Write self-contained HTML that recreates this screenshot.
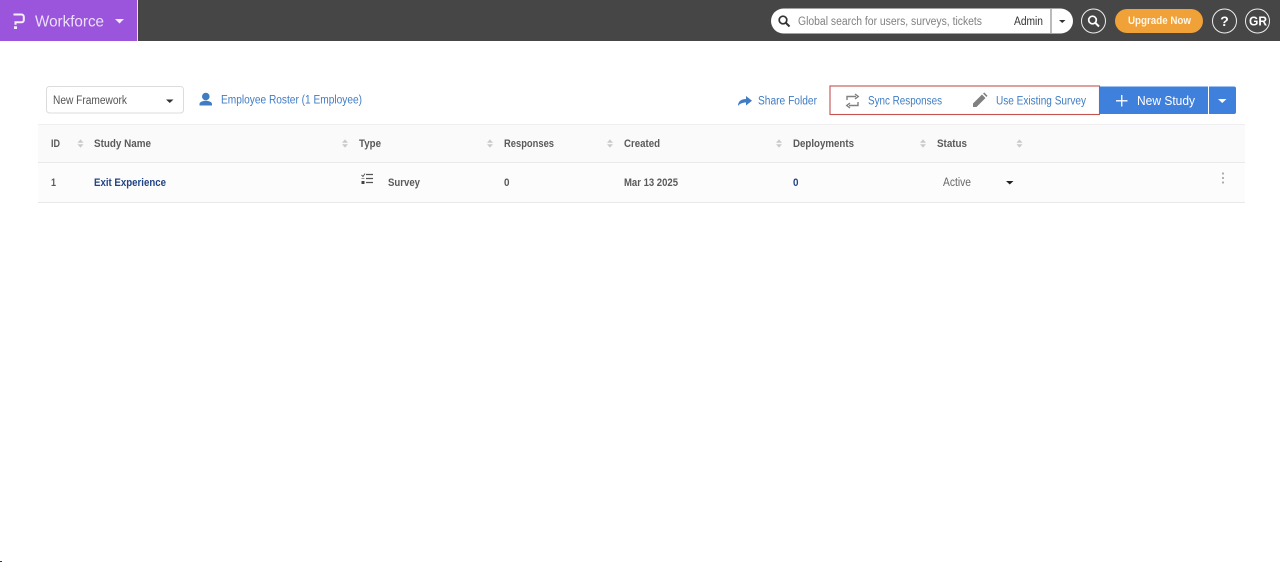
<!DOCTYPE html>
<html lang="en">
<head>
<meta charset="utf-8">
<title>Workforce</title>
<style>
html,body{margin:0;padding:0;background:#fff;width:1280px;height:562px;overflow:hidden}
svg{display:block}
text{font-family:"Liberation Sans",sans-serif;font-size:11.5px}
.h{fill:#5a5a5a;font-weight:bold;font-size:11px}
.l{fill:#3f7cc4}
.b{fill:#5a5a5a;font-weight:bold;font-size:11px}
.n{fill:#234584;font-weight:bold;font-size:11px}
</style>
</head>
<body>
<svg width="1280" height="562" viewBox="0 0 1280 562" xmlns="http://www.w3.org/2000/svg">
<defs>
<g id="s"><path d="M0 3.800 3 0.400 6 3.800Z M0 5.200 3 8.600 6 5.200Z" fill="#c9c9c9"/></g>
</defs>
<rect width="1280" height="562" fill="#fff"/>
<rect width="1280" height="41" fill="#464646"/>
<rect width="137" height="41" fill="#9a55dc"/>
<rect x="137" width="1" height="41" fill="#eadcf6"/>
<path d="M13.500 14.500H21.500A2.300 2.300 0 0 1 23.800 16.800V20A2.300 2.300 0 0 1 21.500 22.300H15.500V24.800" fill="none" stroke="#f6f0fc" stroke-width="2"/>
<rect x="14" y="26.300" width="3" height="2.700" fill="#f6f0fc"/>
<text x="35" y="26.500" style="font-size:16px" fill="#ecdffa" textLength="69" lengthAdjust="spacingAndGlyphs">Workforce</text>
<path d="M115 19H124L119.500 23.500Z" fill="#f3eafb"/>

<rect x="771" y="8.500" width="302" height="25" rx="12.500" fill="#fff"/>
<circle cx="783" cy="20" r="3.800" fill="none" stroke="#333" stroke-width="1.700"/>
<path d="M785.800 22.800 789.500 26.500" stroke="#333" stroke-width="2"/>
<text x="798" y="25" fill="#808080" style="font-size:11.500px" textLength="184" lengthAdjust="spacingAndGlyphs">Global search for users, surveys, tickets</text>
<text x="1014" y="25" fill="#333" style="font-size:11.500px" textLength="29" lengthAdjust="spacingAndGlyphs">Admin</text>
<rect x="1050.500" y="9" width="1" height="24" fill="#777"/>
<path d="M1059 20H1065.500L1062.250 23Z" fill="#333"/>

<circle cx="1093.500" cy="21" r="12" fill="none" stroke="#eee" stroke-width="1"/>
<circle cx="1092.500" cy="20" r="3.800" fill="none" stroke="#fff" stroke-width="1.700"/>
<path d="M1095.300 22.800 1099 26.500" stroke="#fff" stroke-width="2"/>
<rect x="1115" y="9" width="88" height="24" rx="12" fill="#f0a238"/>
<text x="1128" y="24" fill="#fff" style="font-size:11px;font-weight:bold" fill-opacity=".9" textLength="63" lengthAdjust="spacingAndGlyphs">Upgrade Now</text>
<circle cx="1224.500" cy="21" r="12" fill="none" stroke="#eee" stroke-width="1"/>
<text x="1224.500" y="26" fill="#fff" text-anchor="middle" style="font-size:14px;font-weight:bold">?</text>
<circle cx="1257.500" cy="21" r="12" fill="none" stroke="#eee" stroke-width="1"/>
<text x="1249" y="25.500" fill="#fff" style="font-size:12.500px;font-weight:bold" textLength="18" lengthAdjust="spacingAndGlyphs">GR</text>

<rect x="46.500" y="86.500" width="137" height="26.500" rx="3" fill="#fff" stroke="#dcdcdc"/>
<text x="53" y="104" fill="#555" textLength="74" lengthAdjust="spacingAndGlyphs">New Framework</text>
<path d="M166 99.500H173.500L169.750 103Z" fill="#333"/>
<circle cx="205.800" cy="96.500" r="3.800" fill="#3f7cc4"/>
<path d="M199.500 105.500V104C199.500 102 203 100.800 205.800 100.800S212 102 212 104V105.500Z" fill="#3f7cc4"/>
<text class="l" x="221" y="103.500" textLength="141" lengthAdjust="spacingAndGlyphs">Employee Roster (1 Employee)</text>

<path d="M738 106C738 101.500 741 99 746 99V96L752 100.800 746 105.500V102.500C742.500 102.500 740 103.500 738 106Z" fill="#3f7cc4"/>
<text class="l" x="758" y="104.500" textLength="59" lengthAdjust="spacingAndGlyphs">Share Folder</text>
<rect x="830" y="86" width="269.500" height="28.500" fill="#fff" stroke="#c4524f" stroke-width="1.100"/>
<path d="M847 100V96.500H856 M855 94 858.300 96.500 855 99 M858 102V105.500H849 M850 103 846.700 105.500 850 108" fill="none" stroke="#808080" stroke-width="1.400"/>
<text class="l" x="868" y="104.500" textLength="74" lengthAdjust="spacingAndGlyphs">Sync Responses</text>
<path d="M973 107V103.500L982 94.500 985.500 98 976.500 107Z M983 93.500 984.300 92.500 987.500 95.700 986.500 97Z" fill="#808080"/>
<text class="l" x="996" y="104.500" textLength="90" lengthAdjust="spacingAndGlyphs">Use Existing Survey</text>

<path d="M1100 86.500H1208V114H1100Z" fill="#3f80dc"/>
<path d="M1209 86.500H1234A2 2 0 0 1 1236 88.500V112A2 2 0 0 1 1234 114H1209Z" fill="#3f80dc"/>
<path d="M1116 100.800H1127.500 M1121.750 95V106.500" stroke="#fff" stroke-width="1.300"/>
<text x="1137" y="105" fill="#fff" style="font-size:13px" textLength="58" lengthAdjust="spacingAndGlyphs">New Study</text>
<path d="M1218 99H1226.500L1222.250 103Z" fill="#fff"/>

<rect x="38" y="124" width="1207" height="39" fill="#fafafa"/>
<rect x="38" y="163" width="1207" height="39" fill="#fcfcfc"/>
<rect x="38" y="124" width="1207" height="1" fill="#efefef"/>
<rect x="38" y="162" width="1207" height="1" fill="#e9e9e9"/>
<rect x="38" y="202" width="1207" height="1" fill="#e9e9e9"/>

<text class="h" x="51" y="147" textLength="9" lengthAdjust="spacingAndGlyphs">ID</text>
<use href="#s" x="77.500" y="139"/>
<text class="h" x="94" y="147" textLength="57" lengthAdjust="spacingAndGlyphs">Study Name</text>
<use href="#s" x="342" y="139"/>
<text class="h" x="359" y="147" textLength="22" lengthAdjust="spacingAndGlyphs">Type</text>
<use href="#s" x="487" y="139"/>
<text class="h" x="504" y="147" textLength="50" lengthAdjust="spacingAndGlyphs">Responses</text>
<use href="#s" x="607" y="139"/>
<text class="h" x="624" y="147" textLength="36" lengthAdjust="spacingAndGlyphs">Created</text>
<use href="#s" x="776" y="139"/>
<text class="h" x="793" y="147" textLength="61" lengthAdjust="spacingAndGlyphs">Deployments</text>
<use href="#s" x="920" y="139"/>
<text class="h" x="937" y="147" textLength="30" lengthAdjust="spacingAndGlyphs">Status</text>
<use href="#s" x="1016.500" y="139"/>

<text class="b" x="51" y="186" textLength="5" lengthAdjust="spacingAndGlyphs">1</text>
<text class="n" x="94" y="186" textLength="72" lengthAdjust="spacingAndGlyphs">Exit Experience</text>
<path d="M361.500 175 363 176.500 365 173.500" fill="none" stroke="#555" stroke-width=".9"/>
<rect x="361.500" y="181" width="3" height="3" fill="#444"/>
<path d="M366 174.500H373 M366 178.500H373 M366 182.500H373" stroke="#555" stroke-width="1.200"/>
<path d="M361.500 178.500H364.500" stroke="#888" stroke-width=".9"/>
<text class="b" x="388" y="186" textLength="32" lengthAdjust="spacingAndGlyphs">Survey</text>
<text class="b" x="504" y="186" textLength="5.500" lengthAdjust="spacingAndGlyphs">0</text>
<text class="b" x="624" y="186" textLength="54" lengthAdjust="spacingAndGlyphs">Mar 13 2025</text>
<text class="n" x="793" y="186" textLength="5.500" lengthAdjust="spacingAndGlyphs">0</text>
<text x="943" y="186" fill="#666" textLength="28" lengthAdjust="spacingAndGlyphs">Active</text>
<path d="M1006 181H1013.500L1009.750 184.500Z" fill="#222"/>
<circle cx="1223" cy="173.500" r="1.100" fill="#aaa"/>
<circle cx="1223" cy="178" r="1.100" fill="#aaa"/>
<circle cx="1223" cy="182.500" r="1.100" fill="#aaa"/>
<rect x="0" y="561" width="2" height="1" fill="#333"/>
</svg>
</body>
</html>
